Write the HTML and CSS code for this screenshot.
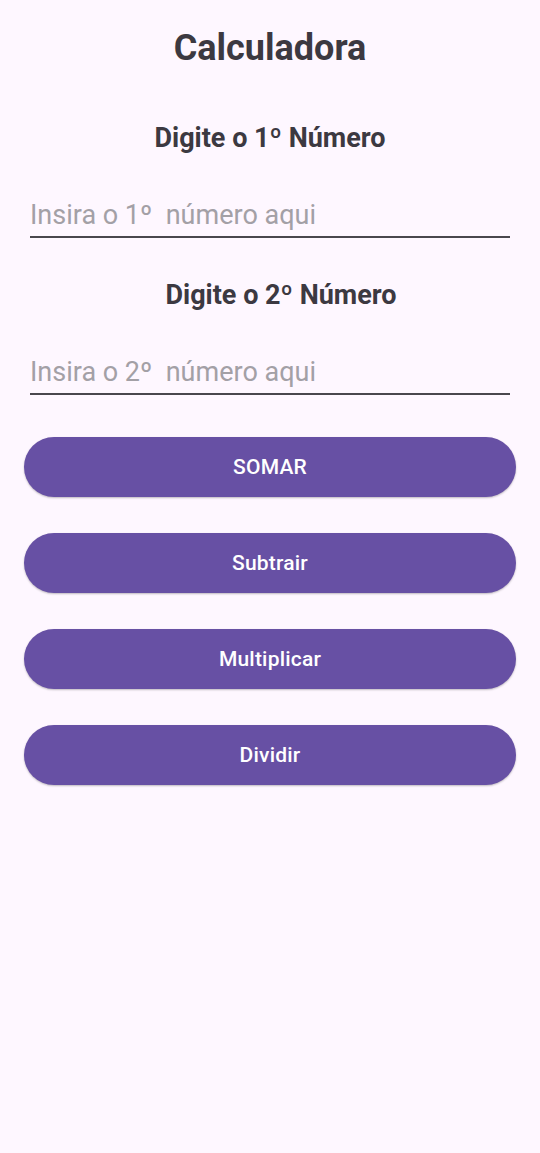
FILE: index.html
```html
<!DOCTYPE html>
<html lang="pt">
<head>
<meta charset="utf-8">
<title>Calculadora</title>
<link rel="stylesheet" href="styles.css">
</head>
<body>
<main class="screen">
  <h1 class="title">Calculadora</h1>
  <h2 class="label label-first">Digite o 1º Número</h2>
  <div class="field"><span class="placeholder">Insira o 1º&nbsp; número aqui</span></div>
  <h2 class="label label-second">Digite o 2º Número</h2>
  <div class="field"><span class="placeholder">Insira o 2º&nbsp; número aqui</span></div>
  <div class="actions">
    <button class="btn" type="button">SOMAR</button>
    <button class="btn" type="button">Subtrair</button>
    <button class="btn" type="button">Multiplicar</button>
    <button class="btn" type="button">Dividir</button>
  </div>
</main>
</body>
</html>
```
FILE: styles.css
```css
html, body {
  margin: 0;
  padding: 0;
  background: #fef7ff;
}
body {
  font-family: Roboto, "Noto Sans", sans-serif;
  width: 540px;
  height: 1153px;
}
.screen {
  display: flex;
  flex-direction: column;
  padding-top: 26px;
}
.title {
  margin: 0;
  font-size: 36px;
  line-height: 44px;
  font-weight: 700;
  color: #3c3941;
  text-align: center;
}
.label {
  margin: 0;
  font-size: 27px;
  line-height: 32px;
  font-weight: 700;
  color: #3c3941;
  text-align: center;
}
.label-first {
  margin-top: 52px;
}
.label-second {
  margin-top: 41px;
  padding-left: 22px;
}
.field {
  margin: 45px 30px 0;
  padding-bottom: 5px;
  border-bottom: 2px solid #4a474e;
  font-size: 27px;
  line-height: 32px;
}
.placeholder {
  color: #a3a0a6;
}
.actions {
  display: flex;
  flex-direction: column;
  gap: 36px;
  margin: 42px 24px 0;
}
.btn {
  height: 60px;
  border: none;
  border-radius: 30px;
  background: #6750a4;
  color: #ffffff;
  font-family: Roboto, "Noto Sans", sans-serif;
  font-size: 21px;
  font-weight: 500;
  letter-spacing: 0.2px;
  box-shadow: 0 1px 2px rgba(0, 0, 0, 0.25);
  padding: 0;
}
```
